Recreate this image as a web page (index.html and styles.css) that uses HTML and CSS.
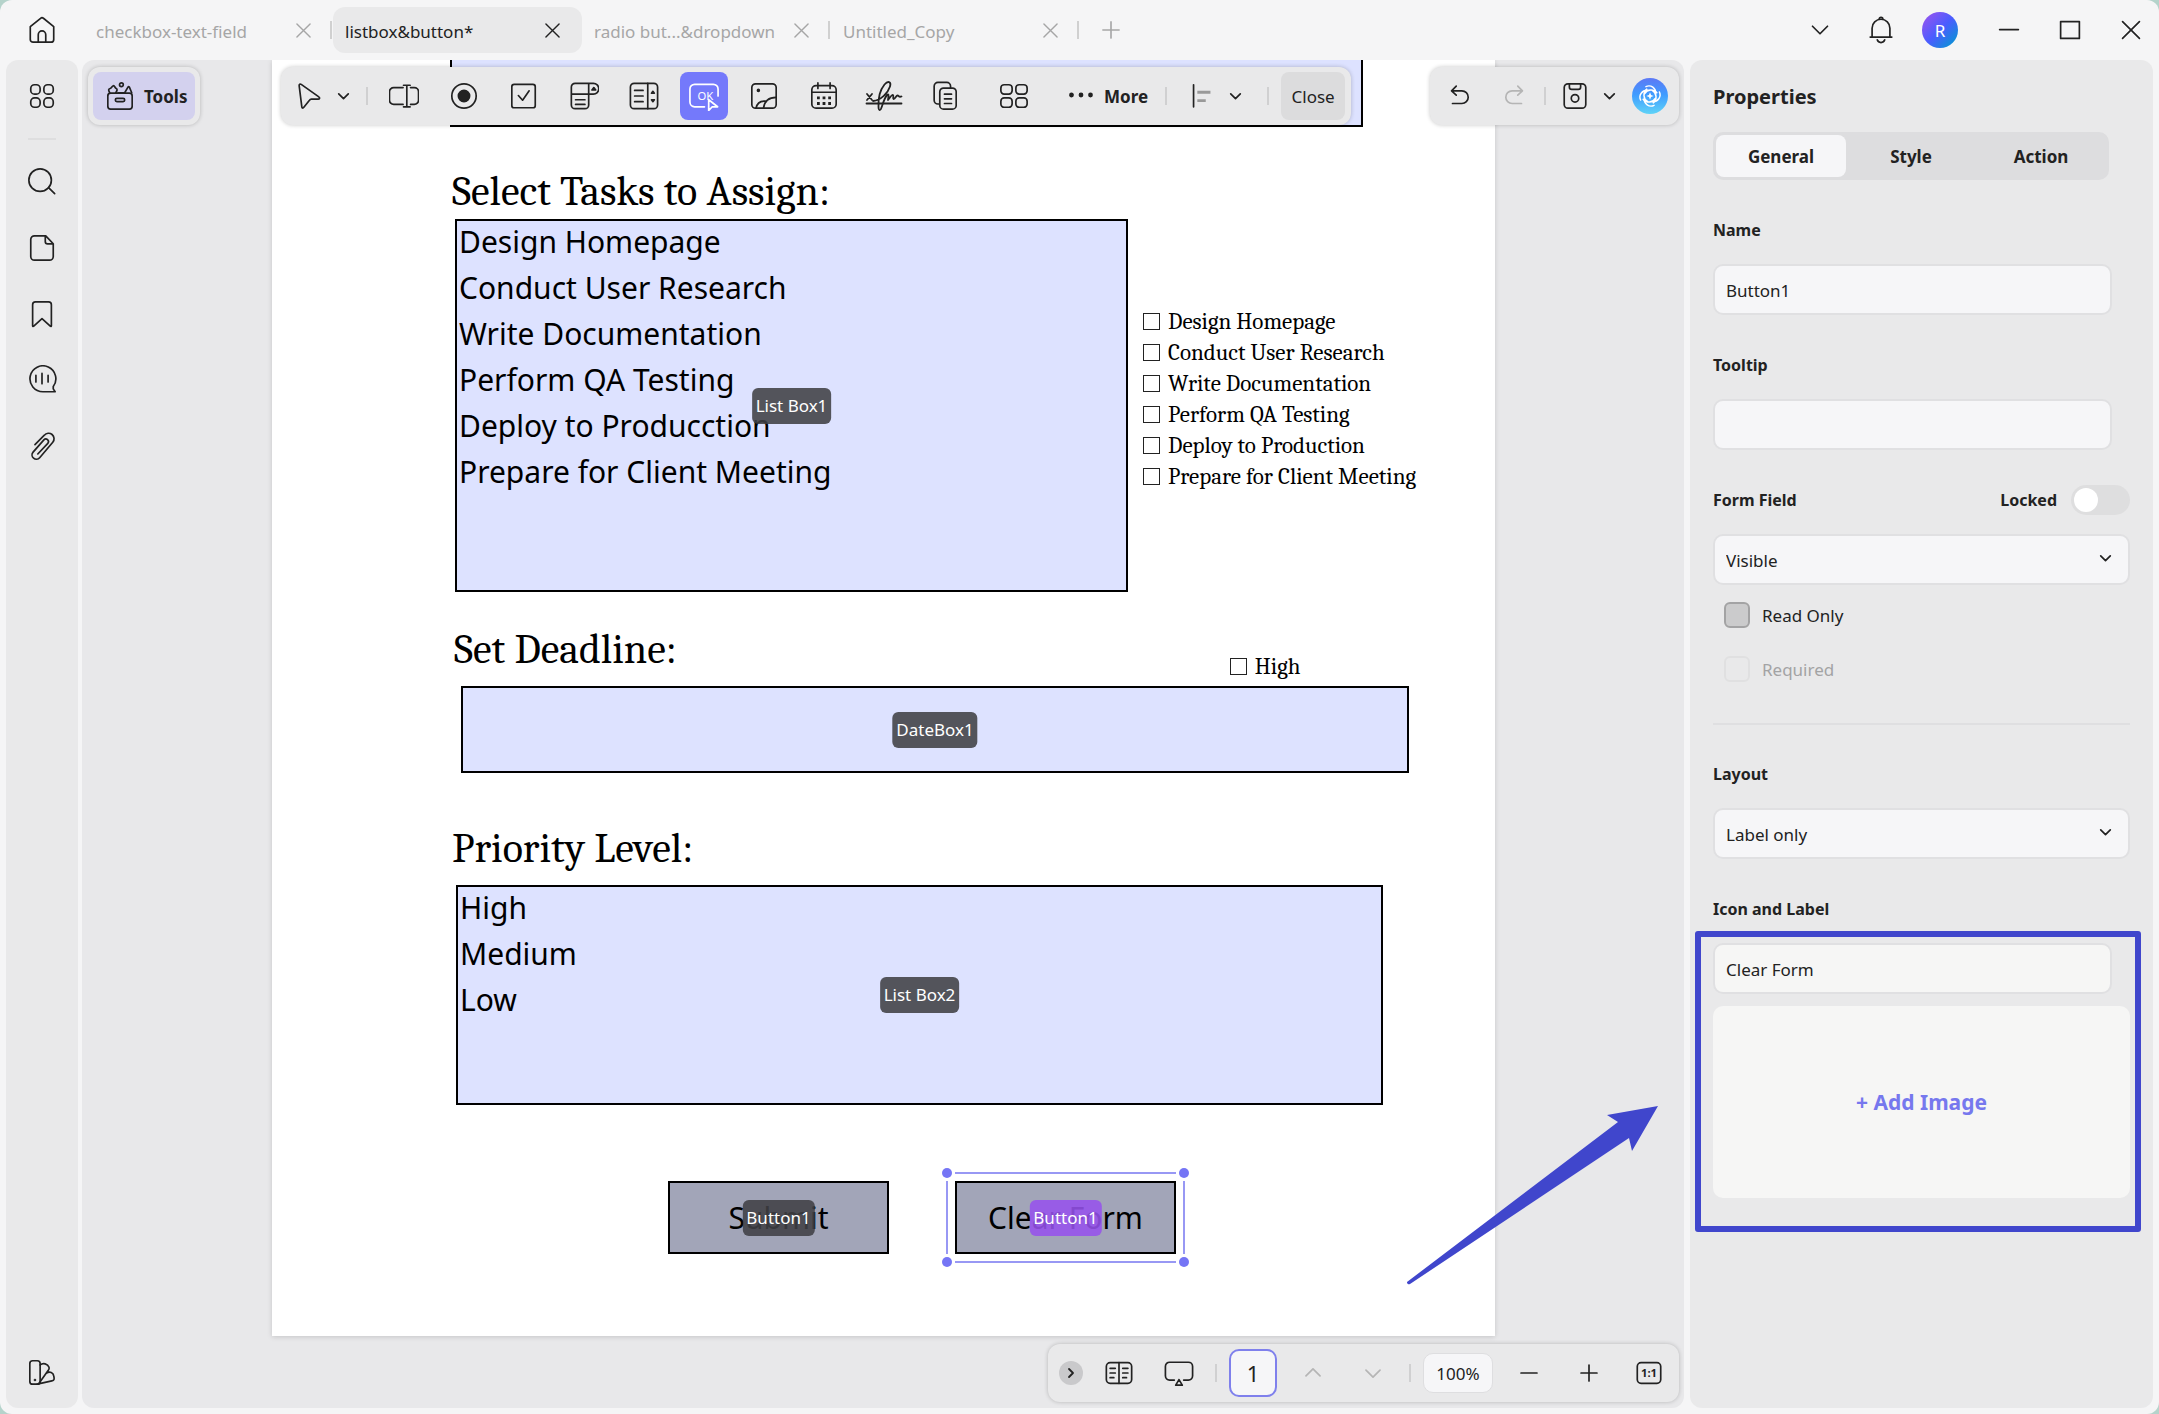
FILE: index.html
```html
<!DOCTYPE html>
<html lang="en">

<head>
  <meta charset="UTF-8">
  <meta name="viewport" content="width=device-width, initial-scale=1.0">
  <title>listbox&amp;button</title>
  <link rel="stylesheet" href="styles.css">
</head>

<body>
  <div class="window">
    <!-- title bar -->
    <header class="titlebar">
      <button class="icon-btn home" aria-label="Home">
        <svg class="icon" viewBox="0 0 32 32"><path d="M3.500 12.500 14.500 3.500a2.400 2.400 0 0 1 3 0L28.500 12.500V26a3 3 0 0 1-3 3h-19a3 3 0 0 1-3-3z" /><path d="M12 29V21a4 4 0 0 1 8 0v8" /></svg>
      </button>
      <nav class="tabs">
        <div class="tab"><a href="#">checkbox-text-field</a><button class="tab-close" aria-label="Close tab"><svg class="icon" viewBox="0 0 16 16"><path d="M1 1 15 15M15 1 1 15" /></svg></button></div>
        <div class="tab active"><a href="#">listbox&amp;button*</a><button class="tab-close" aria-label="Close tab"><svg class="icon" viewBox="0 0 16 16"><path d="M1 1 15 15M15 1 1 15" /></svg></button></div>
        <div class="tab"><a href="#">radio but...&amp;dropdown</a><button class="tab-close" aria-label="Close tab"><svg class="icon" viewBox="0 0 16 16"><path d="M1 1 15 15M15 1 1 15" /></svg></button></div>
        <div class="tab"><a href="#">Untitled_Copy</a><button class="tab-close" aria-label="Close tab"><svg class="icon" viewBox="0 0 16 16"><path d="M1 1 15 15M15 1 1 15" /></svg></button></div>
        <button class="icon-btn add-tab" aria-label="New tab"><svg class="icon" viewBox="0 0 20 20"><path d="M10 1v18M1 10h18" /></svg></button>
      </nav>
      <div class="window-actions">
        <button class="icon-btn" aria-label="More tabs"><svg class="icon" viewBox="0 0 32 32"><path d="M8 12l8 8 8-8" /></svg></button>
        <button class="icon-btn" aria-label="Notifications"><svg class="icon" viewBox="0 0 32 32"><path d="M4.500 23.500h23M6.500 23.500V14a9.500 9.500 0 0 1 19 0v9.500" /><path d="M14 4.500a2 2 0 1 1 4 0" /><path d="M12 26.500a4.200 4.200 0 0 0 8 0" /></svg></button>
        <button class="user" aria-label="Account">R</button>
        <button class="icon-btn" aria-label="Minimize"><svg class="icon" viewBox="0 0 32 32"><path d="M6 15.500h20" /></svg></button>
        <button class="icon-btn" aria-label="Maximize"><svg class="icon" viewBox="0 0 32 32"><path d="M6 7h20v18H6z" /></svg></button>
        <button class="icon-btn" aria-label="Close"><svg class="icon" viewBox="0 0 32 32"><path d="M7 7 25 25M25 7 7 25" /></svg></button>
      </div>
    </header>

    <main class="main">
      <!-- left sidebar -->
      <aside class="sidebar">
        <button class="icon-btn" aria-label="Thumbnails"><svg class="icon" viewBox="0 0 32 32"><rect x="4" y="4" width="10" height="10" rx="4" /><rect x="18" y="4" width="10" height="10" rx="4" /><rect x="4" y="18" width="10" height="10" rx="4" /><rect x="18" y="18" width="10" height="10" rx="4" /></svg></button>
        <hr class="sidebar-line">
        <button class="icon-btn" aria-label="Search"><svg class="icon" viewBox="0 0 32 32"><circle cx="14" cy="14" r="12" /><path d="M23 22l6.500 6.500" /></svg></button>
        <button class="icon-btn" aria-label="Pages"><svg class="icon" viewBox="0 0 32 32"><path d="M20 3H8a4 4 0 0 0-4 4v18a4 4 0 0 0 4 4h16a4 4 0 0 0 4-4V11.500zM19.500 3v6a2.500 2.500 0 0 0 2.500 2.500h6" /></svg></button>
        <button class="icon-btn" aria-label="Bookmarks"><svg class="icon" viewBox="0 0 32 32"><path d="M6 28.500V6a3 3 0 0 1 3-3h14a3 3 0 0 1 3 3v22.500c0 .8-.6 1-1.200.5L16 21l-8.800 8c-.6.500-1.200.300-1.200-.5z" /></svg></button>
        <button class="icon-btn" aria-label="Comments"><svg class="icon" viewBox="0 0 32 32"><path d="M28 25.500 30 28.500H17A13.800 13.800 0 1 1 28 23z" /><path d="M9.500 11v7M16 9v11M22.500 11v7" /></svg></button>
        <button class="icon-btn" aria-label="Attachments"><svg class="icon" viewBox="0 0 32 32"><path d="M8.500 14.500 18.500 4.500a5.800 5.800 0 0 1 9 7.500L13.500 28.500a4.600 4.600 0 0 1-7-6L18 9.500a2.800 2.800 0 0 1 4.200 3.700L11.500 24.500" /></svg></button>
        <button class="icon-btn theme" aria-label="Theme"><svg class="icon" viewBox="0 0 32 32"><rect x="3" y="4" width="11" height="25" rx="3" /><path d="M14 8.500a6 6 0 0 1 9.500 2.500c.5 1.500-.5 3-1 3.500L12.500 28.500M20.500 17.500c4-3 7.500-.5 8 2.500 1 4 .500 5-2 5.500L11 29" /><circle cx="8.500" cy="24.500" r=".5" /></svg></button>
      </aside>

      <!-- document area -->
      <section class="workspace">
        <div class="paper">
          <div class="field field-top"></div>

          <h2 class="title">Select Tasks to Assign:</h2>
          <div class="row">
            <div class="field tasks">
              <ul class="options">
                <li>Design Homepage</li>
                <li>Conduct User Research</li>
                <li>Write Documentation</li>
                <li>Perform QA Testing</li>
                <li>Deploy to Producction</li>
                <li>Prepare for Client Meeting</li>
              </ul>
              <span class="tag">List Box1</span>
            </div>
            <div class="checks">
              <label><input type="checkbox">Design Homepage</label>
              <label><input type="checkbox">Conduct User Research</label>
              <label><input type="checkbox">Write Documentation</label>
              <label><input type="checkbox">Perform QA Testing</label>
              <label><input type="checkbox">Deploy to Production</label>
              <label><input type="checkbox">Prepare for Client Meeting</label>
            </div>
          </div>

          <div class="row deadline">
            <h2 class="title">Set Deadline:</h2>
            <div class="checks high">
              <label><input type="checkbox">High</label>
            </div>
          </div>
          <div class="field date"><span class="tag">DateBox1</span></div>

          <h2 class="title priority-title">Priority Level:</h2>
          <div class="field priority">
            <ul class="options">
              <li>High</li>
              <li>Medium</li>
              <li>Low</li>
            </ul>
            <span class="tag">List Box2</span>
          </div>

          <div class="row form-buttons">
            <div class="form-btn-wrap">
              <button class="form-btn">Submit</button>
              <span class="tag">Button1</span>
            </div>
            <div class="form-btn-wrap selected">
              <button class="form-btn">Clear Form</button>
              <span class="tag purple">Button1</span>
              <i class="edge edge-x"></i>
              <i class="edge edge-y"></i>
              <i class="dot tl"></i><i class="dot tr"></i><i class="dot bl"></i><i class="dot br"></i>
            </div>
          </div>
        </div>

        <!-- floating toolbars -->
        <div class="float-bar tools-bar">
          <button class="tools-btn">
            <svg class="icon" viewBox="0 0 32 32"><rect x="3" y="13" width="26" height="17" rx="3" /><rect x="11" y="18.500" width="10" height="3.500" rx="1.700" /><path d="M5 12.500c-1.500-3-1.500-4 .5-4.500 1.500-.2 2-2.500 3.500-3 1.500 0 1.500 2.500 3 3 1.500.8 1 2-.5 4.500M21 12.500l3.500-6c.5-.8 1-.8 1.500 0l2.500 6M14 12.500h6" /><circle cx="17.500" cy="4" r="2" /></svg>
            Tools
          </button>
        </div>

        <div class="float-bar form-bar">
          <button class="tool" aria-label="Select"><svg class="icon" viewBox="0 0 32 32"><path d="M5.500 5c-.2-1.500 1-2.200 2.200-1.400L26.500 17c1.500 1 .8 2.300-.8 2.300h-7.200c-1 0-1.500.4-2 1.200l-6 7.600c-1 1.300-2 .9-2.200-.8z" /></svg></button>
          <button class="chev" aria-label="Select options"><svg class="icon" viewBox="0 0 16 16"><path d="M3.500 5.500 8 10l4.500-4.500" /></svg></button>
          <i class="sep"></i>
          <button class="tool" aria-label="Text field"><svg class="icon" viewBox="0 0 32 32"><path d="M15 7H5a4.500 4.500 0 0 0-4.500 4.500v9A4.500 4.500 0 0 0 5 25h10M23 7h4a4.500 4.500 0 0 1 4.500 4.500v9A4.500 4.500 0 0 1 27 25h-4M19 4.500v23M15.500 4.500h7M15.500 27.500h7" /></svg></button>
          <button class="tool" aria-label="Radio"><svg class="icon" viewBox="0 0 32 32"><circle cx="16" cy="16" r="13" /><circle cx="16" cy="16" r="6" class="solid" /></svg></button>
          <button class="tool" aria-label="Check box"><svg class="icon" viewBox="0 0 32 32"><rect x="3" y="3.500" width="25" height="25" rx="2.500" /><path d="M10 15.500l4.500 5L21.500 10.500" /></svg></button>
          <button class="tool" aria-label="Drop-down"><svg class="icon" viewBox="0 0 32 32"><path d="M21 14V25.500a4 4 0 0 1-4 4H6.500a4 4 0 0 1-4-4V6.500a4 4 0 0 1 4-4H26a5.700 5.700 0 0 1 0 11.500H2.500M21 2.500V14M7 20h10M7 25h10" /><path class="solid" d="M24.500 9.500 26.500 7l2 2.500z" /></svg></button>
          <button class="tool" aria-label="List box"><svg class="icon" viewBox="0 0 32 32"><rect x="1.500" y="2.500" width="29" height="27" rx="4" /><path d="M20 2.500v27M6 10h9M6 16h9M6 22h9" /><path class="solid" d="M24 13l1.500-2 1.500 2zM24 20l1.500 2 1.500-2z" /></svg></button>
          <button class="tool on" aria-label="Button"><svg class="icon" viewBox="0 0 32 32"><path d="M16.500 27.500H6a5 5 0 0 1-5-5V8.500a5 5 0 0 1 5-5h20a5 5 0 0 1 5 5V16" /><text x="9" y="20.500" class="ok">OK</text><path class="pointer" d="M21 20v11.500l3.800-4h5.700z" /></svg></button>
          <button class="tool" aria-label="Image"><svg class="icon" viewBox="0 0 32 32"><rect x="3" y="3" width="26" height="26" rx="4" /><path d="M7.500 29c1-5 4-8 10-7.500M15.500 29c1-8 6-11.500 13.500-11.500" /><circle cx="10" cy="10" r="1" class="solid" /></svg></button>
          <button class="tool" aria-label="Date"><svg class="icon" viewBox="0 0 32 32"><rect x="3" y="5" width="26" height="24" rx="4.500" /><path d="M3 12h26M9.500 2v6M22.500 2v6" /><path class="cal" d="M8.500 18h3M14.500 18h3M20.500 18h3M8.500 24h3M14.500 24h3M20.500 24h3" /></svg></button>
          <button class="tool" aria-label="Signature"><svg class="icon sign" viewBox="0 0 38 32"><path d="M1.500 23.500h35M2 14l5 6M7 14l-5 6" /><path d="M8 21c8-1 15-8 17-14.500 1.500-5-2-6-5.500-2C15 10 13 18 13.500 27c.200 4 2 4 3 .5 1.500-4 3-10 6-13 1.500-1 1 2.500.5 5.500 1.500-2 4-5.500 5-5s-.5 3.500.5 4c2 0 2.500-3.500 4-3.500s1 2 4 1" /></svg></button>
          <button class="tool" aria-label="Duplicate"><svg class="icon" viewBox="0 0 32 32"><path d="M11 24.500H9.500a4 4 0 0 1-4-4V5.500a4 4 0 0 1 4-4H19a4 4 0 0 1 4 4V7.500" /><rect x="11.500" y="7.500" width="17.500" height="22.500" rx="4" /><path d="M16.500 14H24M16.500 19H24M16.500 24H24" /></svg></button>
          <button class="tool wide" aria-label="Multiple copies"><svg class="icon" viewBox="0 0 32 32"><rect x="2" y="4" width="12" height="10" rx="3.500" /><rect x="18" y="4" width="12" height="10" rx="3.500" /><rect x="2" y="18" width="12" height="10" rx="3.500" /><rect x="18" y="18" width="12" height="10" rx="3.500" /></svg></button>
          <button class="more"><svg class="icon" viewBox="0 0 24 24"><circle cx="2.500" cy="11" r="1.500" class="solid" /><circle cx="12" cy="11" r="1.500" class="solid" /><circle cx="21.500" cy="11" r="1.500" class="solid" /></svg>More</button>
          <i class="sep"></i>
          <button class="tool align" aria-label="Align"><svg class="icon" viewBox="0 0 32 32"><path d="M7 4v23.500" /><path class="bars" d="M11 12h14M11 21h9" /></svg></button>
          <button class="chev" aria-label="Align options"><svg class="icon" viewBox="0 0 16 16"><path d="M3.500 5.500 8 10l4.500-4.500" /></svg></button>
          <i class="sep last"></i>
          <button class="close">Close</button>
        </div>

        <div class="float-bar edit-bar">
          <button class="icon-btn" aria-label="Undo"><svg class="icon" viewBox="0 0 32 32"><path d="M12 5.500 7 10.500l5 4.500M7.500 10.500H18a6.500 6.500 0 0 1 0 13.500H8" /></svg></button>
          <button class="icon-btn faded" aria-label="Redo"><svg class="icon" viewBox="0 0 32 32"><path d="M20 5.500 25 10.500l-5 4.500M24.500 10.500H14a6.500 6.500 0 0 0 0 13.500h10" /></svg></button>
          <i class="sep"></i>
          <button class="icon-btn" aria-label="Save"><svg class="icon" viewBox="0 0 32 32"><rect x="4.500" y="3" width="23" height="26" rx="4" /><path d="M10 3v3.500a2.500 2.500 0 0 0 2.500 2.500h7a2.500 2.500 0 0 0 2.500-2.500V3" /><circle cx="16" cy="18.500" r="4" /></svg></button>
          <button class="chev" aria-label="Save options"><svg class="icon" viewBox="0 0 16 16"><path d="M3.500 5.500 8 10l4.500-4.500" /></svg></button>
          <button class="ai" aria-label="AI assistant"><svg class="icon" viewBox="0 0 32 32"><path d="M11 4.500c6-3 12.500 2 12 8.500M27.500 11c3 6-2 12.500-8.500 12M21 27.500c-6 3-12.500-2-12-8.500M4.500 21c-3-6 2-12.500 8.500-12" /><path d="M12 7.500c-5 4-4.500 12 1 15M24.500 12c-4-5-12-4.500-15 1M20 24.500c5-4 4.500-12-1-15M7.500 20c4 5 12 4.500 15-1" /><path class="star" d="M16 11.500l1.300 3.200 3.200 1.300-3.200 1.300-1.300 3.200-1.300-3.200-3.200-1.300 3.200-1.300z" /></svg></button>
        </div>

        <div class="float-bar page-bar">
          <button class="collapse" aria-label="Collapse"><svg class="icon" viewBox="0 0 16 16"><path d="M6 4l4 4-4 4" /></svg></button>
          <button class="icon-btn" aria-label="Reading mode"><svg class="icon" viewBox="0 0 32 32"><rect x="2.500" y="5" width="27" height="22" rx="4" /><path d="M16 5v22M6.500 11H12M6.500 16H12M6.500 21h4M20 11h5.500M20 16h5.500M20 21h4" /></svg></button>
          <button class="icon-btn" aria-label="Slideshow"><svg class="icon" viewBox="0 0 32 32"><path d="M11 23.500H6A4.500 4.500 0 0 1 1.500 19V9A4.500 4.500 0 0 1 6 4.500h20A4.500 4.500 0 0 1 30.500 9v10a4.500 4.500 0 0 1-4.500 4.500h-5M16 23l-3.500 6h7z" /></svg></button>
          <i class="sep"></i>
          <input class="page-no" type="text" value="1" aria-label="Page number">
          <button class="icon-btn faded" aria-label="Previous page"><svg class="icon" viewBox="0 0 32 32"><path d="M8.500 19l7.500-7.500 7.500 7.500" /></svg></button>
          <button class="icon-btn faded" aria-label="Next page"><svg class="icon" viewBox="0 0 32 32"><path d="M8.500 13l7.500 7.500 7.500-7.500" /></svg></button>
          <i class="sep"></i>
          <input class="zoom-no" type="text" value="100%" aria-label="Zoom level">
          <button class="icon-btn" aria-label="Zoom out"><svg class="icon" viewBox="0 0 32 32"><path d="M7.500 16h17" /></svg></button>
          <button class="icon-btn" aria-label="Zoom in"><svg class="icon" viewBox="0 0 32 32"><path d="M7.500 16h17M16 7.500v17" /></svg></button>
          <button class="icon-btn" aria-label="Actual size"><svg class="icon" viewBox="0 0 32 32"><rect x="3.500" y="5" width="25" height="22" rx="4" /><text x="16" y="20.500" class="ratio">1:1</text></svg></button>
        </div>

        <svg class="arrow" viewBox="0 0 300 220"><path d="M27 202 238 42 227 35 278 26 252 71 249 58 30 204a2 2 0 0 1-3-2z" /></svg>
      </section>

      <!-- properties panel -->
      <aside class="panel">
        <h1 class="panel-title">Properties</h1>
        <div class="switch-tabs">
          <button class="active">General</button>
          <button>Style</button>
          <button>Action</button>
        </div>

        <div class="group">
          <label class="label" for="name">Name</label>
          <input class="input" id="name" type="text" value="Button1">
        </div>
        <div class="group">
          <label class="label" for="tooltip">Tooltip</label>
          <input class="input" id="tooltip" type="text">
        </div>
        <div class="group">
          <div class="label-row">
            <label class="label" for="visible">Form Field</label>
            <label class="label locked">Locked<input class="toggle" type="checkbox"></label>
          </div>
          <div class="select">
            <select id="visible"><option>Visible</option></select>
            <svg class="icon" viewBox="0 0 16 16"><path d="M3.500 5.500 8 10l4.500-4.500" /></svg>
          </div>
          <label class="check"><input type="checkbox">Read Only</label>
          <label class="check disabled"><input type="checkbox" disabled>Required</label>
        </div>
        <hr class="line">
        <div class="group">
          <label class="label" for="layout">Layout</label>
          <div class="select">
            <select id="layout"><option>Label only</option></select>
            <svg class="icon" viewBox="0 0 16 16"><path d="M3.500 5.500 8 10l4.500-4.500" /></svg>
          </div>
        </div>
        <div class="group">
          <label class="label" for="caption">Icon and Label</label>
          <div class="marked">
            <input class="input" id="caption" type="text" value="Clear Form">
            <button class="add-image">+ Add Image</button>
          </div>
        </div>
      </aside>
    </main>
  </div>
</body>

</html>
```
FILE: styles.css
```css
* {
  box-sizing: border-box;
}

body {
  margin: 0;
  background: #b5d3cb;
  font-family: "Segoe UI", "Noto Sans", "Open Sans", sans-serif;
  font-size: 17px;
  color: #222;
}

button,
input,
select {
  font: inherit;
  color: inherit;
}

button {
  border: none;
  padding: 0;
  background: none;
  cursor: pointer;
}

h1,
h2,
ul {
  margin: 0;
  padding: 0;
}

.window {
  height: 100vh;
  display: flex;
  flex-direction: column;
  background: #f5f5f6;
  border-radius: 12px;
  overflow: hidden;
}

.icon {
  display: block;
  width: 30px;
  height: 30px;
  fill: none;
  stroke: #222;
  stroke-width: 1.8;
  stroke-linecap: round;
  stroke-linejoin: round;
}

.icon .solid {
  fill: #222;
}

.icon-btn {
  width: 48px;
  height: 48px;
  display: flex;
  align-items: center;
  justify-content: center;
  flex-shrink: 0;
}

.faded .icon {
  stroke: #b5b5b5;
}

.sep {
  width: 2px;
  height: 18px;
  background: #d0d0d1;
  flex-shrink: 0;
}

/* title bar */
.titlebar {
  height: 60px;
  flex-shrink: 0;
  display: flex;
  align-items: center;
  padding: 0 4px 0 18px;
}

.tabs {
  display: flex;
  align-items: center;
  margin-left: 18px;
}

.tab {
  width: 249px;
  height: 46px;
  display: flex;
  align-items: center;
  justify-content: space-between;
  padding: 0 22px 0 12px;
  border-radius: 12px;
  position: relative;
}

.tab a {
  color: #a6a6a6;
  text-decoration: none;
  line-height: 24px;
  padding-top: 4px;
}

.tab::after {
  content: "";
  position: absolute;
  right: 1px;
  top: 14px;
  width: 2px;
  height: 18px;
  background: #d0d0d0;
}

.tab.active {
  background: #e9e9ea;
}

.tab.active::after {
  display: none;
}

.tab.active a {
  color: #222;
}

.tab-close .icon {
  width: 15px;
  height: 15px;
  stroke: #a6a6a6;
  stroke-width: 1.5;
}

.active .tab-close .icon {
  stroke: #222;
}

.add-tab {
  margin-left: 7px;
}

.add-tab .icon {
  width: 18px;
  height: 18px;
  stroke: #a6a6a6;
}

.window-actions {
  margin-left: auto;
  display: flex;
  align-items: center;
  gap: 13px;
}

.user {
  width: 36px;
  height: 36px;
  margin: 0 14px 0 4px;
  border-radius: 50%;
  background: linear-gradient(135deg, #9155f0 10%, #4a5cff 50%, #0a92d6 90%);
  color: #fff;
}

/* main */
.main {
  flex: 1;
  min-height: 0;
  display: flex;
  padding: 0 6px 6px;
}

.sidebar {
  width: 72px;
  display: flex;
  flex-direction: column;
  align-items: center;
  background: #e9e9ea;
  border-radius: 12px;
  padding: 12px 0;
  gap: 18px;
}

.sidebar-line {
  width: 28px;
  height: 2px;
  margin: 0;
  border: none;
  background: #dededf;
}

.theme {
  margin-top: auto;
}

.workspace {
  flex: 1;
  min-width: 0;
  position: relative;
  margin: 0 6px 0 4px;
  padding: 0 189px 0 190px;
  background: #e8e8ea;
  border-radius: 12px;
  overflow: hidden;
}

/* paper */
.paper {
  background: #fff;
  padding: 0 0 82px 178px;
  box-shadow: 0 1px 5px rgba(0, 0, 0, 0.15);
  color: #000;
}

.row {
  display: flex;
}

.field {
  position: relative;
  background: #dde2ff;
  border: 2px solid #000;
  font-size: 30px;
}

.field-top {
  width: 913px;
  height: 67px;
  border-top: none;
}

.title {
  font-family: Cambria, Caladea, "Liberation Serif", serif;
  font-size: 42px;
  font-weight: normal;
  line-height: 50px;
}

.field-top + .title {
  margin: 40px 0 2px 2px;
}

.tasks {
  width: 673px;
  height: 373px;
  margin-left: 5px;
}

.options {
  list-style: none;
  padding-left: 2px;
  line-height: 46px;
  margin-top: -2px;
}

.checks {
  font-family: Cambria, Caladea, "Liberation Serif", serif;
  font-size: 23px;
  margin: 87px 0 0 15px;
}

.checks label {
  display: flex;
  align-items: center;
  gap: 8px;
  line-height: 31px;
}

.checks input {
  appearance: none;
  width: 17px;
  height: 17px;
  margin: 0;
  border: 1px solid #222;
}

.tag {
  position: absolute;
  left: 50%;
  top: 50%;
  transform: translate(-50%, -50%);
  padding: 1px 4px;
  border-radius: 6px;
  background: rgba(64, 64, 68, 0.88);
  color: #fff;
  font-size: 17px;
  line-height: 34px;
  white-space: nowrap;
}

.purple {
  background: rgba(150, 82, 236, 0.88);
}

.deadline {
  margin: 33px 0 4px 4px;
  height: 57px;
}

.high {
  margin: auto 0 0 553px;
}

.date {
  width: 948px;
  height: 87px;
  margin-left: 11px;
}

.priority-title {
  margin: 51px 0 11px 2px;
}

.priority {
  width: 927px;
  height: 220px;
  margin-left: 6px;
}

.form-buttons {
  margin: 76px 0 0 218px;
  gap: 66px;
}

.form-btn-wrap {
  position: relative;
}

.form-btn {
  display: block;
  width: 221px;
  height: 73px;
  border: 2px solid #000;
  background: #a2a5b8;
  font-size: 30px;
}

.edge {
  position: absolute;
  inset: -9px;
  pointer-events: none;
}

.edge-x {
  left: 0;
  right: 0;
  border: solid #9898f4;
  border-width: 2px 0;
}

.edge-y {
  top: 0;
  bottom: 0;
  border: solid #9898f4;
  border-width: 0 2px;
}

.dot {
  position: absolute;
  width: 10px;
  height: 10px;
  border-radius: 50%;
  background: #7575f5;
}

.tl,
.tr {
  top: -13px;
}

.bl,
.br {
  bottom: -13px;
}

.tl,
.bl {
  left: -13px;
}

.tr,
.br {
  right: -13px;
}

/* floating bars */
.float-bar {
  position: absolute;
  display: flex;
  align-items: center;
  height: 58px;
  border-radius: 12px;
  background: #e9e9ea;
  box-shadow: 0 0 4px rgba(0, 0, 0, 0.22);
}

.tools-bar {
  left: 6px;
  top: 7px;
  padding: 5px;
}

.tools-btn {
  width: 102px;
  height: 48px;
  display: flex;
  align-items: center;
  gap: 9px;
  padding-left: 12px;
  border-radius: 8px;
  background: #d3d1ee;
  font-weight: bold;
}

.form-bar {
  left: 199px;
  top: 7px;
  padding: 0 6px 0 4px;
}

.tool {
  width: 48px;
  height: 48px;
  display: flex;
  align-items: center;
  justify-content: center;
  border-radius: 8px;
}

.tool + .tool {
  margin-left: 12px;
}

.tool + .wide {
  margin-left: 22px;
}

.chev {
  width: 20px;
  height: 48px;
  display: flex;
  align-items: center;
  justify-content: center;
}

.chev .icon,
.select .icon {
  width: 17px;
  height: 17px;
  stroke-width: 1.6;
}

.form-bar .sep {
  margin: 0 12px 0 13px;
}

.form-bar .last {
  margin-left: 22px;
}

.form-bar .sign {
  width: 38px;
  height: 32px;
}

.on {
  background: #7479fb;
}

.on .icon {
  stroke: #fff;
}

.ok {
  fill: #fff;
  stroke: none;
  font-size: 12px;
}

.on .pointer {
  fill: #7479fb;
}

.cal {
  stroke-width: 3;
  stroke-linecap: butt;
}

.more {
  display: flex;
  align-items: center;
  gap: 11px;
  margin: 0 4px 0 31px;
  font-weight: bold;
}

.more .icon {
  width: 24px;
  height: 24px;
}

.bars {
  stroke: #999;
  stroke-width: 3;
  stroke-linecap: butt;
}

.form-bar .align {
  width: 46px;
}

.close {
  width: 64px;
  height: 48px;
  border-radius: 8px;
  background: #dcdcdd;
}

.edit-bar {
  right: 5px;
  top: 7px;
  padding: 0 11px 0 6px;
}

.edit-bar .icon-btn + .icon-btn {
  margin-left: 6px;
}

.edit-bar .sep {
  margin: 0 5px 0 6px;
}

.ai {
  width: 36px;
  height: 36px;
  margin-left: 13px;
  border-radius: 50%;
  background: linear-gradient(#5d78f5, #3f9bff 45%, #5fd3f7);
  display: flex;
  align-items: center;
  justify-content: center;
}

.ai .icon {
  width: 26px;
  height: 26px;
  stroke: #fff;
}

.ai .star {
  fill: #fff;
  stroke: none;
}

.page-bar {
  right: 5px;
  bottom: 6px;
  padding: 0 6px 0 11px;
}

.page-bar .icon-btn {
  margin-right: 12px;
}

.page-bar .icon-btn:last-child {
  margin-right: 0;
}

.collapse {
  width: 24px;
  height: 24px;
  margin-right: 12px;
  border-radius: 50%;
  background: #c9c9cb;
  display: flex;
  align-items: center;
  justify-content: center;
}

.collapse .icon {
  width: 16px;
  height: 16px;
}

.page-bar .sep {
  margin-right: 12px;
}

.page-no {
  width: 48px;
  height: 48px;
  margin-right: 12px;
  border: 2px solid #7f80ec;
  border-radius: 10px;
  background: #f6f6f8;
  text-align: center;
  font-size: 22px;
}

.zoom-no {
  width: 70px;
  height: 40px;
  margin-right: 12px;
  border: 1px solid #dedee0;
  border-radius: 10px;
  background: #f6f6f8;
  text-align: center;
}

.ratio {
  fill: #222;
  stroke: none;
  font-size: 12px;
  font-weight: bold;
  text-anchor: middle;
}

.arrow {
  position: absolute;
  right: 4px;
  bottom: 108px;
  width: 300px;
  height: 220px;
  fill: #4046cc;
  pointer-events: none;
}

/* properties panel */
.panel {
  width: 463px;
  flex-shrink: 0;
  padding: 23px 23px 0;
  background: #e9e9ea;
  border-radius: 12px;
}

.panel-title {
  font-size: 20px;
  line-height: 28px;
}

.switch-tabs {
  display: flex;
  height: 48px;
  margin: 21px 21px 0 0;
  padding: 3px;
  border-radius: 10px;
  background: #dddddf;
}

.switch-tabs button {
  flex: 1;
  border-radius: 8px;
  font-weight: bold;
}

.switch-tabs .active {
  background: #f6f6f8;
}

.group {
  margin-top: 38px;
}

.label {
  display: block;
  margin-bottom: 22px;
  font-size: 16px;
  line-height: 24px;
  font-weight: bold;
}

.label-row {
  display: flex;
  justify-content: space-between;
}

.locked {
  display: flex;
  align-items: center;
  gap: 14px;
}

.toggle {
  appearance: none;
  position: relative;
  width: 59px;
  height: 30px;
  margin: -3px 0;
  border-radius: 15px;
  background: #dededf;
}

.toggle::before {
  content: "";
  position: absolute;
  left: 3px;
  top: 3px;
  width: 24px;
  height: 24px;
  border-radius: 50%;
  background: #fff;
}

.input,
.select select {
  display: block;
  width: 100%;
  height: 51px;
  padding: 2px 11px 0;
  border: 2px solid #e0e0e2;
  border-radius: 10px;
  background: #f6f6f8;
  font-size: 17px;
}

.input {
  width: calc(100% - 18px);
}

.select {
  position: relative;
}

.select select {
  appearance: none;
}

.select .icon {
  position: absolute;
  right: 16px;
  top: 16px;
  pointer-events: none;
}

.check {
  display: flex;
  align-items: center;
  gap: 12px;
  height: 26px;
  margin: 17px 0 0 11px;
}

.check input {
  appearance: none;
  width: 26px;
  height: 26px;
  margin: 0;
  border: 2px solid #a3a3a4;
  border-radius: 6px;
  background: #cbcbcc;
}

.disabled {
  margin-top: 28px;
  color: #a3a3a4;
}

.disabled input {
  border-color: #e0e0e1;
  background: none;
}

.line {
  height: 2px;
  margin: 41px 0 -1px;
  border: none;
  background: #dfdfe1;
}

.marked {
  position: relative;
}

/* highlight frame around the label controls */
.marked::after {
  content: "";
  position: absolute;
  inset: -12px -11px -34px -18px;
  border: 6px solid #4046cc;
  border-radius: 3px;
  pointer-events: none;
}

.marked .input,
.add-image {
  background: #f6f6f5;
}

.add-image {
  display: block;
  width: 100%;
  height: 192px;
  margin-top: 12px;
  border-radius: 10px;
  color: #7678ee;
  font-size: 21px;
  font-weight: bold;
}
```
